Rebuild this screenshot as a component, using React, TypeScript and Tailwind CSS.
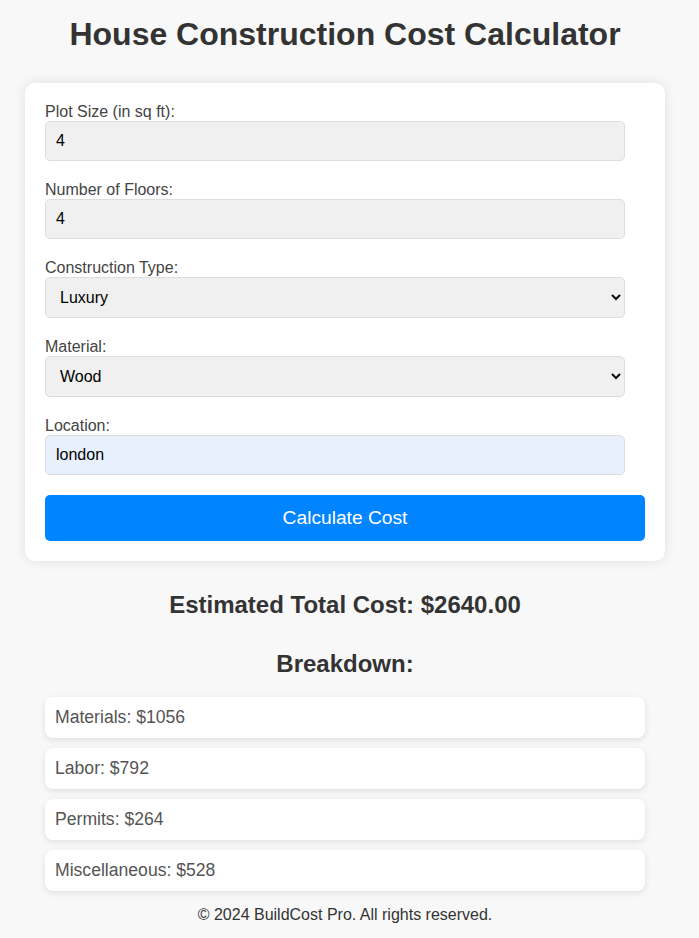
import React, { useState } from 'react';

const costFactors: Record<string, number> = { Basic: 100, Standard: 140, Luxury: 165 };

export default function App() {
    const [plot, setPlot] = useState('4');
    const [floors, setFloors] = useState('4');
    const [type, setType] = useState('Luxury');
    const [material, setMaterial] = useState('Wood');
    const [location, setLocation] = useState('london');
    const [total, setTotal] = useState(2640);

    const calculate = (e: React.FormEvent) => {
        e.preventDefault();
        setTotal(Number(plot) * Number(floors) * (costFactors[type] ?? 100));
    };

    const breakdown = [
        { label: 'Materials', value: Math.round(total * 0.4) },
        { label: 'Labor', value: Math.round(total * 0.3) },
        { label: 'Permits', value: Math.round(total * 0.1) },
        { label: 'Miscellaneous', value: Math.round(total * 0.2) },
    ];

    const fieldClass =
        'w-[580px] h-[40px] px-[10px] bg-[#f0f0f0] border border-[#dddddd] rounded-[5px] text-[16px] text-black outline-none';

    return (
        <div className="min-h-screen bg-[#f8f8f8] text-[#333] font-['Liberation_Sans',Arial,sans-serif]">
            <div className="w-[690px] pt-[16px] pb-[14px] flex flex-col items-center">
                <h1 className="text-[32px] font-bold leading-[36px] mb-[31px]">House Construction Cost Calculator</h1>

                <form onSubmit={calculate} className="w-[640px] bg-white rounded-[10px] p-5 shadow-[0_0_12px_rgba(0,0,0,0.1)] flex flex-col">
                    <label className="text-[16px] leading-[18px] text-[#444]">Plot Size (in sq ft):</label>
                    <input value={plot} onChange={(e) => setPlot(e.target.value)} className={fieldClass} />

                    <label className="mt-5 text-[16px] leading-[18px] text-[#444]">Number of Floors:</label>
                    <input value={floors} onChange={(e) => setFloors(e.target.value)} className={fieldClass} />

                    <label className="mt-5 text-[16px] leading-[18px] text-[#444]">Construction Type:</label>
                    <select value={type} onChange={(e) => setType(e.target.value)} className={`${fieldClass} h-[41px]`}>
                        <option>Basic</option>
                        <option>Standard</option>
                        <option>Luxury</option>
                    </select>

                    <label className="mt-5 text-[16px] leading-[18px] text-[#444]">Material:</label>
                    <select value={material} onChange={(e) => setMaterial(e.target.value)} className={`${fieldClass} h-[41px]`}>
                        <option>Brick</option>
                        <option>Concrete</option>
                        <option>Wood</option>
                    </select>

                    <label className="mt-5 text-[16px] leading-[18px] text-[#444]">Location:</label>
                    <input
                        value={location}
                        onChange={(e) => setLocation(e.target.value)}
                        className="w-[580px] h-[40px] px-[10px] bg-[#e8f0fe] border border-[#dddddd] rounded-[5px] text-[16px] text-black outline-none"
                    />

                    <button type="submit" className="mt-5 w-full h-[46px] bg-[#0084ff] text-white text-[19.2px] rounded-[5px]">
                        Calculate Cost
                    </button>
                </form>

                <h2 className="mt-[30px] text-[24px] font-bold leading-[27px]">Estimated Total Cost: ${total.toFixed(2)}</h2>

                <h3 className="mt-[32px] text-[24px] font-bold leading-[27px]">Breakdown:</h3>

                <ul className="mt-[20px] w-[600px] flex flex-col gap-[10px]">
                    {breakdown.map((item) => (
                        <li
                            key={item.label}
                            className="bg-white rounded-[8px] px-[10px] py-[10px] text-[17.6px] leading-[21px] text-[#555] shadow-[0_2px_6px_rgba(0,0,0,0.1)]"
                        >
                            {item.label}: ${item.value}
                        </li>
                    ))}
                </ul>

                <footer className="mt-[15px] text-[16px] leading-[18px]">© 2024 BuildCost Pro. All rights reserved.</footer>
            </div>
        </div>
    );
}
